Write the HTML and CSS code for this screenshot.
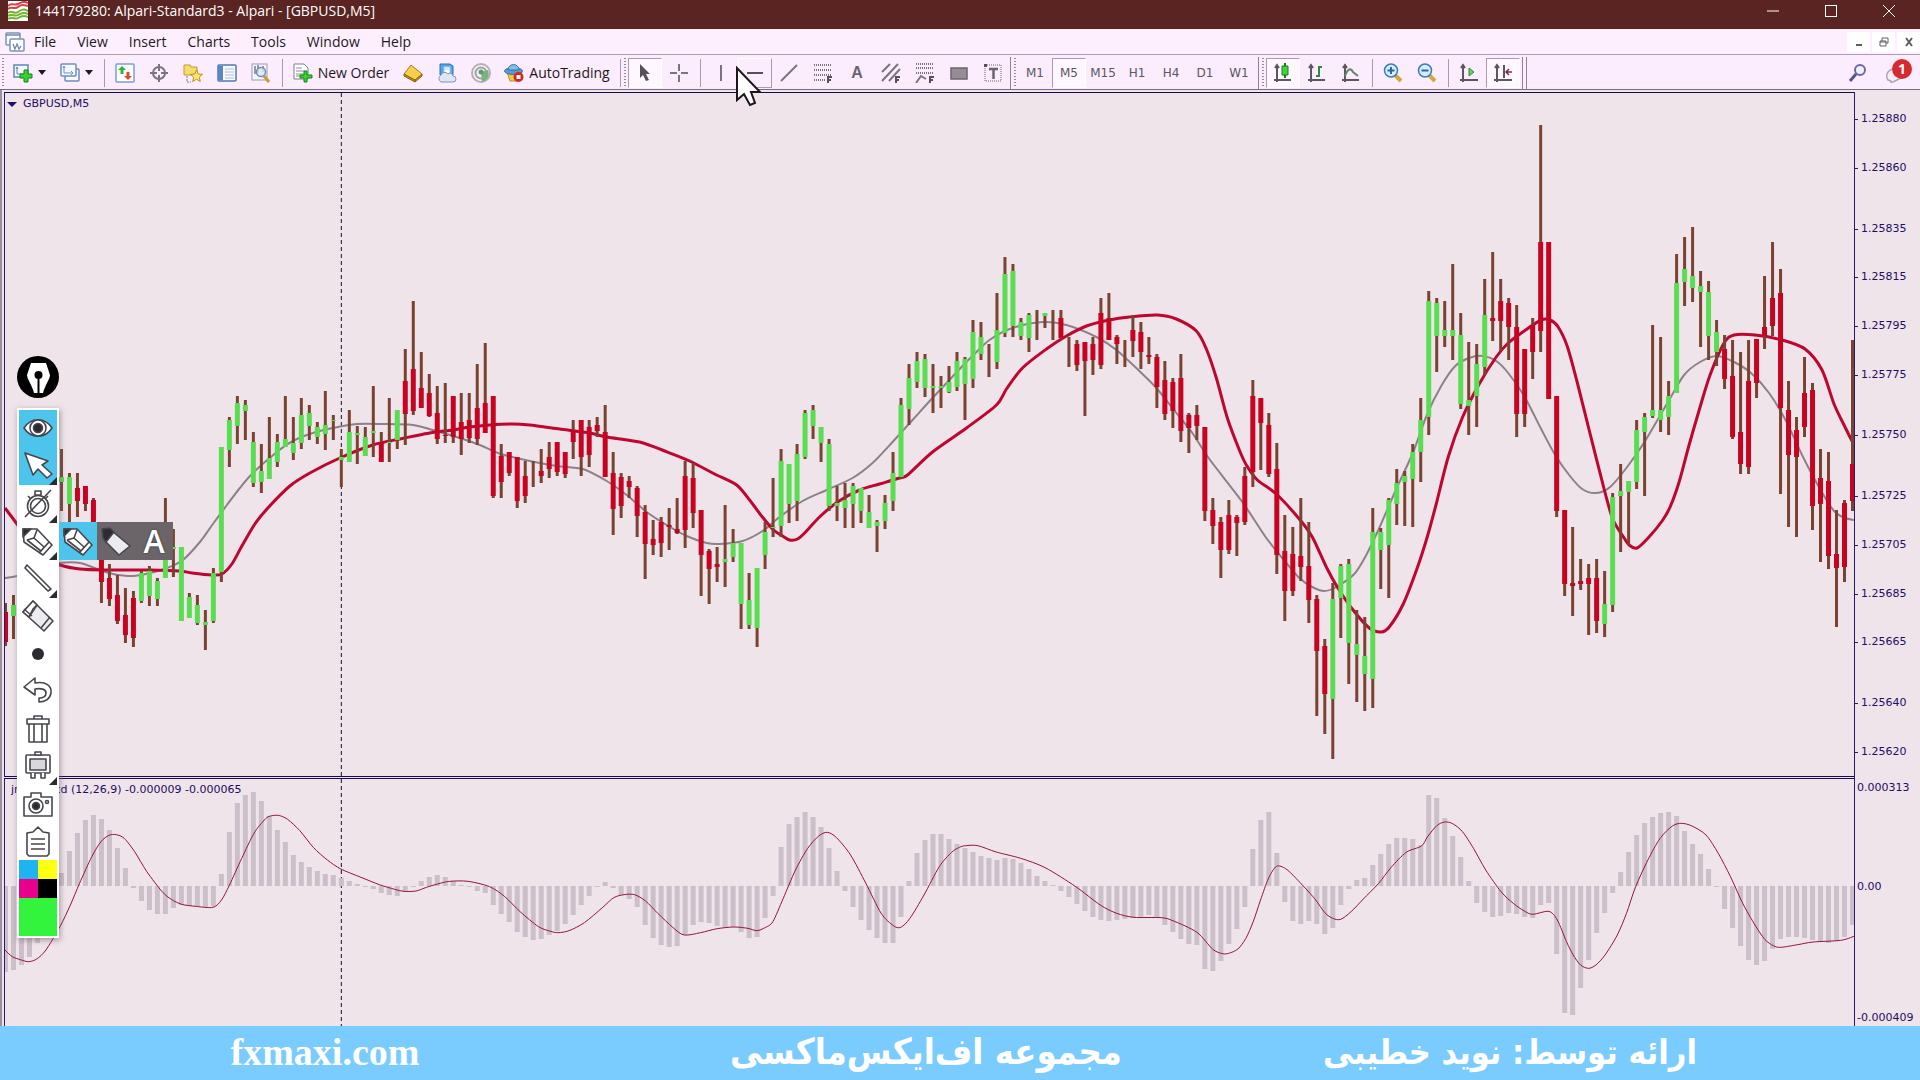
FILE: index.html
```html
<!DOCTYPE html>
<html lang="en">
<head>
<meta charset="utf-8">
<title>144179280: Alpari-Standard3 - Alpari - [GBPUSD,M5]</title>
<link rel="stylesheet" href="styles.css">
</head>
<body>
<header class="titlebar">
  <svg class="app-logo" viewBox="0 0 20 20" aria-hidden="true"><path fill="#fff" d="M0 0h20v20H0z"/><path d="M0 5c4-4 6 0 10-2s6-3 10-1M0 8c4-3 7 1 10-2s6-2 10-1" fill="none" stroke="#d8414a" stroke-width="2"/><path d="M0 12c4-4 6 2 10-1s6-3 10-1M0 15c4-3 7 1 10-1s6-3 10-1M0 18c4-3 7 1 10-1s6-3 10-1" fill="none" stroke="#6fb52c" stroke-width="2"/></svg>
  <h1 class="title">144179280: Alpari-Standard3 - Alpari - [GBPUSD,M5]</h1>
  <div class="window-controls">
    <button aria-label="Minimize"><svg viewBox="0 0 14 14"><path d="M1 7h12"/></svg></button>
    <button aria-label="Maximize"><svg viewBox="0 0 14 14"><rect x="1.500" y="1.500" width="11" height="11"/></svg></button>
    <button aria-label="Close"><svg viewBox="0 0 14 14"><path d="M1 1l12 12M13 1L1 13"/></svg></button>
  </div>
</header>

<nav class="menubar" aria-label="Main menu">
  <svg class="menu-logo" viewBox="0 0 20 20" aria-hidden="true"><g fill="#fff" stroke="#7c93b8" stroke-width="1.5"><rect x="1" y="1" width="14" height="12" rx="1"/><rect x="5" y="7" width="14" height="12" rx="1"/></g><path d="M1 3h14M8 12l2 5 2-5 2 5 2-3" fill="none" stroke="#6f88b0" stroke-width="1.3"/></svg>
  <button>File</button><button>View</button><button>Insert</button><button>Charts</button><button>Tools</button><button>Window</button><button>Help</button>
  <div class="child-controls">
    <button aria-label="Minimize chart"><svg viewBox="0 0 10 10"><path d="M2 8h6" stroke-width="2"/></svg></button>
    <button aria-label="Restore chart"><svg viewBox="0 0 10 10"><path d="M3 4V1h6v5H7M1 4h6v5H1zM1 5h6"/></svg></button>
    <button aria-label="Close chart"><svg viewBox="0 0 10 10"><path d="M2 1l6 8M8 1L2 9" stroke-width="2"/></svg></button>
  </div>
</nav>

<div class="toolbar" role="toolbar" aria-label="Toolbar">
  <span class="grip"></span>
  <button class="drop" aria-label="New chart"><svg viewBox="0 0 20 20"><path d="M1 2h14v12H1z" fill="#f4f8ff" stroke="#5f86b8" stroke-width="1.5"/><path d="M4 5v6h8M3 6l1-2 1 2" fill="none" stroke="#5f86b8"/><path d="M11 7h4v4h4v4h-4v4h-4v-4H7v-4h4z" fill="#35d52e" stroke="#15861a"/></svg><i class="caret"></i></button>
  <button class="drop" aria-label="Profiles"><svg viewBox="0 0 20 20"><g fill="#f4f8ff" stroke="#6d8fbd" stroke-width="1.5"><rect x="5" y="6" width="14" height="12" rx="1"/><rect x="1" y="1" width="15" height="12" rx="1"/></g><path d="M4 4v6h9M3 5l1-2 1 2M11 8l2 2-2 2" fill="none" stroke="#6d8fbd"/></svg><i class="caret"></i></button>
  <span class="sep"></span>
  <button aria-label="Market watch"><svg viewBox="0 0 20 20"><rect x="1" y="1" width="18" height="18" rx="1" fill="#fdfcff" stroke="#7ba0cc" stroke-width="1.5"/><path d="M7 3l4 4H8.500v4h-3V7H3z" fill="#2eb53a"/><path d="M13 17l-4-4h2.500V9h3v4H17z" fill="#e2492c"/></svg></button>
  <button aria-label="Data window"><svg viewBox="0 0 20 20"><g fill="none" stroke="#7a7480" stroke-width="2"><circle cx="10" cy="10" r="6"/><path d="M10 1v7M10 12v7M1 10h7M12 10h7"/></g></svg></button>
  <button aria-label="Navigator"><svg viewBox="0 0 20 20"><path d="M1 2h6l1 2h6v8H1z" fill="#f5dc6e" stroke="#c39a2c"/><path d="M4 13v6h4" fill="none" stroke="#6b7da0" stroke-dasharray="2 1"/><path d="M13.500 7l1.800 4 4.200.4-3.200 2.800 1 4.300-3.800-2.300-3.800 2.300 1-4.300L7.500 11.400l4.200-.4z" fill="#ffe46a" stroke="#b8912a"/></svg></button>
  <button aria-label="Terminal"><svg viewBox="0 0 20 20"><rect x="1" y="2" width="18" height="16" rx="1" fill="#f7faff" stroke="#4f78b0" stroke-width="1.500"/><path d="M1 3h5v14H1z" fill="#5b86c2"/><path d="M8 6h9M8 9h9M8 12h9M8 15h9" stroke="#a9bdd8"/></svg></button>
  <button aria-label="Strategy tester"><svg viewBox="0 0 20 20"><rect x="1" y="1" width="15" height="16" fill="#f8f6fc" stroke="#9c9ab0"/><path d="M4 3v8M7 2v8M12 3v6" stroke="#6b7da0" stroke-width="1.500"/><circle cx="10" cy="9" r="4.500" fill="#d9e8f5cc" stroke="#6f8fae" stroke-width="1.500"/><path d="M13 13l5 6" stroke="#c79b35" stroke-width="3"/></svg></button>
  <span class="sep"></span>
  <button class="order"><svg viewBox="0 0 20 20"><path d="M1 1h10l4 4v11H1z" fill="#fff" stroke="#7d7d90"/><path d="M3 5h6M3 8h9M3 11h9M3 13h5" stroke="#8d8da0"/><path d="M11 8h3v4h5v3h-5v4h-3v-4H7v-3h4z" fill="#35d52e" stroke="#15861a"/></svg>New Order</button>
  <button aria-label="MetaEditor"><svg viewBox="0 0 20 20"><path d="M1 11l7-9 11 9-7 7z" fill="#f6cf4d" stroke="#a97a18"/><path d="M1 11v2l11 6v-2zM12 17l7-6v2l-7 6z" fill="#c28d20" stroke="#8a6512"/></svg></button>
  <button aria-label="Cloud storage"><svg viewBox="0 0 20 20"><path d="M3 1h10l3 2v9H3z" fill="#4fa8e8" stroke="#2c74b4"/><path d="M7 4h6v7H7zM7 6h6" fill="#fff" stroke="#a9d1f2"/><path d="M4 19a4 4 0 010-7 4 4 0 017-1 3 3 0 015 2 3 3 0 010 6z" fill="#dce6f6" stroke="#8293b4"/></svg></button>
  <button aria-label="Signals"><svg viewBox="0 0 20 20"><g fill="none" stroke="#b3b0b6" stroke-width="2"><circle cx="10" cy="10" r="9"/><circle cx="10" cy="10" r="5.500" stroke="#98a69c"/></g><path d="M10 9l7-2c2 5 0 10-6 12z" fill="#77b37f"/><circle cx="10" cy="9" r="2.500" fill="#5f9b70"/></svg></button>
  <button class="auto"><svg viewBox="0 0 20 20"><path d="M3 9h15l-5 9H6z" fill="#f2c843" stroke="#b98d22"/><ellipse cx="9.500" cy="8" rx="9" ry="3.500" fill="#5a9bd4" stroke="#3873ac"/><path d="M4 7a5.500 5.500 0 0111 0z" fill="#83bde8" stroke="#3873ac"/><circle cx="14.500" cy="14" r="5" fill="#d8261f"/><path d="M12.500 12h4v4h-4z" fill="#fff"/></svg>AutoTrading</button>
  <span class="sep"></span><span class="grip"></span>
  <button class="on" aria-label="Cursor"><svg viewBox="0 0 20 20"><path d="M5 1l10 10h-4l3 6-3 1-3-6-3 3z" fill="#57505a"/></svg></button>
  <button aria-label="Crosshair"><svg viewBox="0 0 20 20"><path d="M10 1v7M10 12v7M1 10h7M12 10h7" stroke="#7a7480" stroke-width="2"/></svg></button>
  <span class="sep"></span>
  <button aria-label="Vertical line"><svg viewBox="0 0 20 20"><path d="M10 2v16" stroke="#7a7480" stroke-width="2"/></svg></button>
  <button class="hover" aria-label="Horizontal line"><svg viewBox="0 0 20 20"><path d="M2 10h16" stroke="#57505a" stroke-width="2"/></svg></button>
  <button aria-label="Trendline"><svg viewBox="0 0 20 20"><path d="M2 18L18 2" stroke="#7a7480" stroke-width="2"/></svg></button>
  <button aria-label="Fibonacci retracement"><svg viewBox="0 0 20 20"><path d="M1 2h18M1 7h18M1 12h18M1 17h11" stroke="#7a7480" stroke-width="2" stroke-dasharray="1 1"/><path d="M15 20v-6h4M15 17h3" fill="none" stroke="#57505a" stroke-width="2"/></svg></button>
  <button class="letter">A</button>
  <button aria-label="Equidistant channel"><svg viewBox="0 0 20 20"><path d="M1 9l8-8M1 18L17 1M8 18L19 6" stroke="#7a7480" stroke-width="2"/><path d="M15 20v-6h4M15 17h3" fill="none" stroke="#57505a" stroke-width="2"/></svg></button>
  <button aria-label="Fibonacci expansion"><svg viewBox="0 0 20 20"><path d="M1 1h18M1 5h18M1 10h18" stroke="#7a7480" stroke-width="2" stroke-dasharray="1 1"/><path d="M1 20l5-7 5 3" fill="none" stroke="#7a7480" stroke-width="2"/><path d="M15 20v-6h4M15 17h3" fill="none" stroke="#57505a" stroke-width="2"/></svg></button>
  <button aria-label="Rectangle"><svg viewBox="0 0 20 20"><path d="M2 5h16v11H2z" fill="#958c98" stroke="#6a6470" stroke-width="1.500"/></svg></button>
  <button aria-label="Text label"><svg viewBox="0 0 20 20"><path d="M2 2h16v16H2z" fill="none" stroke="#6a6470" stroke-dasharray="1 1"/><path d="M6 6h9M10.500 6v10" stroke="#6a6470" stroke-width="2.500"/><path d="M1 1h3v3H1z" fill="#57505a"/></svg></button>
  <span class="edge"></span><span class="grip"></span>
  <button class="tf">M1</button><button class="tf on">M5</button><button class="tf">M15</button><button class="tf">H1</button><button class="tf">H4</button><button class="tf">D1</button><button class="tf">W1</button>
  <span class="edge wide"></span><span class="grip"></span>
  <button class="on" aria-label="Candlesticks"><svg viewBox="0 0 20 20"><path d="M4 3v16M1 17h17M2 5l2-3 2 3" fill="none" stroke="#5d555f" stroke-width="2"/><path d="M12 0v15" stroke="#187a1c" stroke-width="2"/><path d="M9 3h6v9H9z" fill="#3fd53b" stroke="#187a1c"/></svg></button>
  <button aria-label="Bar chart"><svg viewBox="0 0 20 20"><path d="M4 3v16M1 17h17M2 5l2-3 2 3" fill="none" stroke="#5d555f" stroke-width="2"/><path d="M12 3v11M12 4h3M9 13h3" stroke="#2e8b3a" stroke-width="2"/></svg></button>
  <button aria-label="Line chart"><svg viewBox="0 0 20 20"><path d="M4 3v16M1 17h17M2 5l2-3 2 3" fill="none" stroke="#5d555f" stroke-width="2"/><path d="M4 13c3-8 6-8 8-4l5 4" fill="none" stroke="#5c8a63" stroke-width="2"/></svg></button>
  <span class="sep"></span>
  <button aria-label="Zoom in"><svg viewBox="0 0 20 20"><path d="M12 12l6 6" stroke="#d3a93a" stroke-width="4"/><circle cx="8" cy="7.500" r="6.500" fill="#d4ecfb" stroke="#3c7cb8" stroke-width="1.500"/><path d="M4.500 7.500h7M8 4v7" stroke="#2b66a6" stroke-width="2"/></svg></button>
  <button aria-label="Zoom out"><svg viewBox="0 0 20 20"><path d="M12 12l6 6" stroke="#d3a93a" stroke-width="4"/><circle cx="8" cy="7.500" r="6.500" fill="#d4ecfb" stroke="#3c7cb8" stroke-width="1.500"/><path d="M4.500 7.500h7" stroke="#2b66a6" stroke-width="2"/></svg></button>
  <span class="sep"></span>
  <button aria-label="Auto scroll"><svg viewBox="0 0 20 20"><path d="M4 3v16M1 17h18M2 5l2-3 2 3" fill="none" stroke="#5d555f" stroke-width="2"/><path d="M10 5l5 4-5 4z" fill="#5fd36a" stroke="#2e8b3a"/></svg></button>
  <button class="on" aria-label="Chart shift"><svg viewBox="0 0 20 20"><path d="M4 3v16M1 17h18M2 5l2-3 2 3M11 2v13" fill="none" stroke="#5d555f" stroke-width="2"/><path d="M13 9h6M16 6l-3 3 3 3" fill="none" stroke="#7b3146" stroke-width="1.500"/></svg></button>
  <span class="edge wide"></span><span class="edge"></span>
  <div class="toolbar-right">
    <button aria-label="Search"><svg viewBox="0 0 20 20"><circle cx="12" cy="7" r="5" fill="#eef0ff" stroke="#6a6a9c" stroke-width="2"/><path d="M8 11l-6 7" stroke="#565688" stroke-width="3"/></svg></button>
    <button class="chat" aria-label="Notifications"><svg viewBox="0 0 20 20"><path d="M2 17a7 7 0 01-1-6 8 8 0 018-5h6v9l-6 3-4 2v-2z" fill="#f6eef8" stroke="#b0a4b4" stroke-width="1.500"/></svg><span class="badge">1</span></button>
  </div>
</div>

<main class="workspace">
  <section class="pane" aria-label="GBPUSD chart">
    <svg id="price" viewBox="5 93 1850 683" preserveAspectRatio="none"></svg>
    <p class="pane-label"><i class="caret"></i>GBPUSD,M5</p>
  </section>
  <ul class="axis price-axis">
    <li class="s20">1.25880</li><li class="s25">1.25860</li><li class="s20">1.25835</li><li class="s20">1.25815</li><li class="s20">1.25795</li><li class="s25">1.25775</li><li class="s25">1.25750</li><li class="s20">1.25725</li><li class="s20">1.25705</li><li class="s20">1.25685</li><li class="s25">1.25665</li><li class="s20">1.25640</li><li class="last">1.25620</li>
  </ul>
  <section class="pane" aria-label="MACD">
    <svg id="macd" viewBox="5 779 1850 247" preserveAspectRatio="none"></svg>
    <p class="pane-label macd-label">jma_macd (12,26,9) -0.000009 -0.000065</p>
  </section>
  <ul class="axis macd-axis"><li>0.000313</li><li>0.00</li><li>-0.000409</li></ul>

  <aside class="pen">
    <button class="pen-logo" aria-label="Pen menu"><svg viewBox="0 0 42 42"><circle cx="21" cy="21" r="21" fill="#000"/><path d="M14 7h15l4 12c0 4-5 10-7 18H17c-2-8-7-14-7-18z" fill="#fff"/><circle cx="21.500" cy="19" r="4" fill="#000"/><path d="M21.500 19v18" stroke="#000" stroke-width="2"/></svg></button>
    <div class="palette">
      <div class="tools">
        <button class="sel" aria-label="Show ink"><svg viewBox="0 0 32 32"><path d="M2 15c7-11 21-11 28 0-7 11-21 11-28 0z" fill="#fff"/><circle cx="16" cy="15" r="8" fill="#fff"/><circle cx="16" cy="15" r="4.500" fill="#2b2b30"/></svg></button>
        <button class="sel more" aria-label="Pointer"><svg viewBox="0 0 32 32"><path d="M3 3l23 8-6 4 10 9-5 4-9-9-5 6z" fill="#fff"/></svg></button>
        <button class="more" aria-label="Timer"><svg viewBox="0 0 32 32"><circle cx="16" cy="18" r="10.500"/><circle cx="16" cy="18" r="7.500"/><path d="M13 3h6v4h-6zM6 8l3 3M26 8l-3 3M3 29L29 2"/></svg></button>
        <button class="more" aria-label="Pencil"><svg viewBox="0 0 32 32"><path d="M1 4h14l15 16-9 10L2 17z"/><path d="M1 4h8l-8 8z" fill="#2b2b30"/><path d="M5 15l7-2 3-8M5 15l14 11 8-9M12 13l10 9M17 28l10-11" fill="none"/></svg></button>
        <button class="more" aria-label="Line"><svg viewBox="0 0 32 32"><path d="M5 2l24 24-3 2L3 5z"/></svg></button>
        <button aria-label="Eraser"><svg viewBox="0 0 32 32"><path d="M11 1l20 20-9 10L1 12z" fill="#ececf0"/><path d="M1 12L11 1l4 4-4 4-4 8z" fill="#fff"/><path d="M7 17l8-12M19 28l9-11M2 9l8 7" fill="none"/></svg></button>
        <button aria-label="Pen size"><svg viewBox="0 0 32 32"><circle cx="16" cy="16" r="6" fill="#2b2b30" stroke="none"/></svg></button>
        <button aria-label="Undo"><svg viewBox="0 0 32 32"><path d="M2 12l11-9v5c11-2 17 3 16 10-1 6-6 9-12 9v-4c5 0 7-2 7-5 0-4-5-5-11-4v6z"/></svg></button>
        <button aria-label="Delete"><svg viewBox="0 0 32 32"><path d="M5 6h22v5H5zM12 3h8v3h-8zM7 11h18v18H7zM12 11v18M20 11v18"/></svg></button>
        <button class="more" aria-label="Whiteboard"><svg viewBox="0 0 32 32"><rect x="4" y="5" width="24" height="18" rx="1"/><path d="M8 9h16v11H8z" fill="#d8d8dc"/><path d="M13 2h6v3h-6zM9 23v5h4v-5M19 23v5h4v-5"/></svg></button>
        <button aria-label="Screenshot"><svg viewBox="0 0 32 32"><path d="M2 9h7V5h10v4h11v19H2z"/><circle cx="14" cy="18" r="7"/><circle cx="14" cy="18" r="3.500" fill="#2b2b30"/><circle cx="25" cy="14" r="1.500"/></svg></button>
        <button aria-label="Clipboard"><svg viewBox="0 0 32 32"><path d="M5 8l6-1 5-5 5 5 6 1v21l-2 2H7l-2-2zM9 14h14M9 19h14M9 24h14"/></svg></button>
      </div>
      <div class="swatches">
        <button class="cyan" aria-label="Cyan"></button><button class="yellow" aria-label="Yellow"></button><button class="magenta" aria-label="Magenta"></button><button class="black" aria-label="Black"></button><button class="current" aria-label="Current colour"></button>
      </div>
      <div class="flyout">
        <button class="sel" aria-label="Pencil tool"><svg viewBox="0 0 32 32"><path d="M2 4h13l15 16-9 10L3 17z"/><path d="M2 4h7l-7 7z" fill="#2b2b30"/><path d="M5 15l7-2 3-8M5 15l14 11 8-9M12 13l10 9M17 28l10-11" fill="none"/></svg></button>
        <button aria-label="Marker"><svg viewBox="0 0 32 32"><path d="M12 6l18 15-11 9L5 16z" fill="#ececf0"/><path d="M2 4l8-1 4 4-8 10-3-4z" fill="#2b2b30"/></svg></button>
        <button class="text-tool">A</button>
      </div>
    </div>
  </aside>
</main>

<footer class="banner">
  <a href="#" class="site">fxmaxi.com</a>
  <span class="group" lang="fa" dir="rtl">مجموعه اف‌ایکس‌ماکسی</span>
  <span lang="fa" dir="rtl">ارائه توسط: نوید خطیبی</span>
</footer>
<svg class="pointer" viewBox="0 0 30 42" aria-hidden="true"><path d="M2 2v32l7-6 6 11 5-2-4-11h9z" fill="#fff" stroke="#1d1420" stroke-width="2"/></svg>
<script src="chart.js"></script>
</body>
</html>
```
FILE: styles.css
```css
* { box-sizing: border-box; }
body {
  margin: 0;
  height: 100vh;
  display: flex;
  flex-direction: column;
  overflow: hidden;
  font: 14px/20px "Open Sans", "Noto Sans", sans-serif;
  color: #1f1722;
  background: #efe4ea;
}
button { border: 0; padding: 0; background: none; font: inherit; color: inherit; display: flex; align-items: center; justify-content: center; }
svg { display: block; }
ul, p, h1 { margin: 0; padding: 0; list-style: none; }

.titlebar { flex: none; height: 29px; padding: 0 2px 6px 8px; display: flex; align-items: center; color: #fff; background: #592421; border-bottom: 1px solid #5c1a1c; }
.app-logo { width: 20px; height: 20px; margin-right: 7px; }
.title { font-size: 14px; font-weight: 400; }
.window-controls { margin-left: auto; display: flex; }
.window-controls button { width: 58px; height: 22px; }
.window-controls svg { width: 14px; height: 14px; fill: none; stroke: #fff; stroke-width: 1; }

.menubar { flex: none; height: 26px; padding-left: 5px; display: flex; align-items: center; background: #fdeffe; border-bottom: 1px solid #aa9fb0; }
.menu-logo { width: 20px; height: 20px; }
.menubar > button { padding: 0 0 0 9px; margin-right: 12px; }
.child-controls { margin-left: auto; display: flex; gap: 2px; }
.child-controls button { width: 23px; height: 20px; background: #fff; }
.child-controls svg { width: 10px; height: 10px; fill: none; stroke: #615a66; }

.toolbar { flex: none; height: 35px; padding: 1px 0 0 2px; display: flex; align-items: center; background: #fbedfd; border-bottom: 1px solid #766d7a; }
.toolbar button { flex: none; width: 34px; height: 30px; }
.toolbar svg { width: 20px; height: 20px; flex: none; }
.toolbar .drop { width: 47px; gap: 5px; }
.toolbar .order, .toolbar .auto { width: auto; min-width: 110px; gap: 5px; padding: 0 4px; white-space: nowrap; }
.toolbar .auto { min-width: 118px; }
.toolbar .on { background: #fff7ff; border: 1px solid #a79bac; border-right-color: #fff; border-bottom-color: #fff; }
.toolbar .hover { border: 1px solid #a79bac; border-top-color: #fff; border-left-color: #fff; }
.toolbar .letter { font: 700 16px/20px "Liberation Sans", sans-serif; color: #6a6470; }
.toolbar .tf { font: 12px/20px "DejaVu Sans", sans-serif; color: #5d5562; }
.grip { flex: none; width: 4px; height: 30px; background: repeating-linear-gradient(#938998 0 1px, transparent 1px 3px); border-right: 2px solid #fbedfd; }
.sep { flex: none; width: 8px; height: 28px; background: linear-gradient(#a79bac, #a79bac) center / 1px 100% no-repeat; }
.edge { flex: none; width: 4px; height: 32px; border-left: 1px solid #8f8594; }
.edge.wide { margin-left: 2px; }
.caret { width: 0; height: 0; border: 4px solid transparent; border-top: 5px solid #1f1722; border-bottom: 0; }
.toolbar-right { margin-left: auto; padding-right: 7px; display: flex; }
.toolbar .chat { position: relative; margin-left: 4px; }
.badge { position: absolute; top: 1px; right: 1px; width: 20px; height: 20px; border-radius: 50%; background: #d72a30; color: #fff; font-weight: 700; }

.workspace { flex: 1; min-height: 0; position: relative; padding: 2px 0 0 2px; display: grid; grid-template-columns: minmax(0, 1fr) 66px; grid-template-rows: minmax(0, 685fr) minmax(0, 248fr); row-gap: 1px; border-left: 2px solid #9a919e; }
.pane { position: relative; min-height: 0; border-top: 1px solid #190a55; border-left: 1px solid #2b1a72; }
.pane:first-child { border-bottom: 1px solid #190a55; }
.pane > svg { width: 100%; height: 100%; }
.pane-label { position: absolute; top: 4px; left: 2px; display: flex; align-items: center; gap: 6px; font: 11px/14px "DejaVu Sans", sans-serif; color: #220d66; }
.pane-label .caret { border-width: 5px 5px 0; border-top-color: #220d66; }
.macd-label { left: 6px; }
.axis { display: flex; flex-direction: column; border-left: 1px solid #2b1a72; font: 11px/16px "DejaVu Sans", sans-serif; color: #220d66; }
.price-axis { padding-top: 19px; margin-bottom: -1px; }
.price-axis li { display: flex; align-items: flex-start; gap: 3px; min-height: 0; }
.price-axis li::before { content: ""; width: 3px; height: 1px; margin-top: 8px; background: #2b1a72; }
.s20 { flex: 20 1 0; }
.s25 { flex: 25 1 0; }
.last { flex: 0 0 34px; }
.macd-axis { padding: 2px 0 0 2px; display: grid; grid-template-rows: 99fr 131fr 16px; }

.pen { position: absolute; left: 15px; top: 266px; z-index: 2; }
.pen-logo svg { width: 42px; height: 42px; }
.palette { position: relative; width: 42px; margin-top: 10px; padding: 2px; background: #fff; box-shadow: 1px 2px 6px #6b5f6b99; }
.tools { height: 450px; display: grid; grid-auto-rows: 1fr; }
.tools button { position: relative; }
.palette svg { width: 32px; height: 32px; fill: #fff; stroke: #46464d; stroke-width: 1.6; stroke-linejoin: round; }
.palette .sel { background: #4cc4ec; }
.more::after { content: ""; position: absolute; right: 0; bottom: 0; border-left: 8px solid transparent; border-bottom: 8px solid #2b2b30; }
.swatches { display: grid; grid-template-columns: 1fr 1fr; grid-template-rows: 19px 19px 38px; }
.cyan { background: #1eb4f0; }
.yellow { background: #ffff10; }
.magenta { background: #e8008c; }
.black { background: #000; }
.swatches .current { grid-column: span 2; background: #32f43c; }
.flyout { position: absolute; left: 42px; top: 114px; display: flex; background: #6b6469; }
.flyout button { width: 38px; height: 38px; }
.text-tool { font: 600 32px/38px "Open Sans", sans-serif; color: #fff; text-shadow: 0 0 2px #2b2b30; }

.banner { flex: none; height: 54px; padding-bottom: 2px; display: grid; grid-template-columns: 650fr 552fr 616fr 102fr; align-items: center; justify-items: center; background: #7accff; color: #fff; font: 700 34px/52px "DejaVu Sans Condensed", "DejaVu Sans", sans-serif; white-space: nowrap; }
.group { font-size: 36px; }
.site { color: #fff; text-decoration: none; font: 700 38px/52px "Liberation Serif", serif; }
.pointer { position: absolute; left: 735px; top: 66px; width: 30px; height: 42px; z-index: 3; }

.wick { stroke: #7a4331; stroke-width: 3; fill: none; }
.up { fill: #5add52; }
.down { fill: #c60422; }
.hist { fill: #cbc0c9; }
.ma-fast, .ma-slow, .signal, .period { fill: none; stroke-linejoin: round; }
.ma-fast { stroke: #8d8189; stroke-width: 2; }
.ma-slow { stroke: #bd0630; stroke-width: 3; }
.signal { stroke: #94123c; stroke-width: 1; }
.period { stroke: #150b30; stroke-width: 1; stroke-dasharray: 4 3; }
```
FILE: chart.js
```js
// Each bar: direction, then high, body top, body bottom and low as plot rows.
const bars = `d603,612,642,646 u595,605,616,639 u560,570,590,600 d550,560,580,590 u520,530,550,560 u500,510,530,540 u470,480,510,520
u449,477,482,511 u473,477,504,530 d473,488,501,517 d486,486,504,511 d498,500,530,535 d525,540,582,603 d564,578,599,606 d575,595,621,624
d588,615,635,643 d591,598,638,647 u571,573,601,603 u566,571,596,606 u578,581,599,606 u498,545,578,578 u529,547,549,577 u547,547,621,621
u593,597,618,618 u595,605,623,625 u610,622,625,650 u568,573,621,623 u447,447,572,582 u417,420,450,467 u396,403,426,444 u400,405,411,440
u432,442,483,487 u444,471,482,493 u417,458,479,479 u434,442,462,467 u396,439,447,447 u417,443,453,460 u398,415,443,449 u405,413,426,440
u422,427,437,444 u391,425,434,450 u415,420,421,440 u449,457,460,487 u410,432,462,462 u426,433,435,464 u427,437,456,456 u386,431,433,457
d432,442,462,462 u398,442,443,462 u410,410,440,449 d349,381,414,445 d301,369,411,415 d352,388,408,408 d374,393,416,417 d386,413,439,444
d383,435,436,443 d396,396,437,443 d393,422,439,455 d393,420,438,443 d364,408,439,445 d343,403,433,433 d396,396,496,498 d444,456,482,498
d452,452,473,476 d457,457,501,508 d461,476,496,503 d461,461,461,487 d449,471,476,483 d442,457,469,478 d442,442,472,476 d452,452,474,478
d420,430,442,459 d420,420,457,476 d420,427,455,467 d417,425,431,437 d405,432,477,477 d452,473,509,535 d473,477,506,518 d476,481,487,498
d486,488,516,537 d505,512,544,579 d520,539,545,555 d517,522,543,557 d508,525,527,550 d498,529,533,534 d461,476,530,548 d463,478,513,528
d510,510,555,596 d549,551,569,604 d547,564,567,582 u505,559,562,587 u529,543,557,562 u543,543,604,629 u573,600,625,629 u568,568,628,647
u522,532,555,569 u478,527,528,537 u449,461,526,537 u464,464,504,523 u444,454,501,521 u410,413,457,459 u405,410,426,439 u427,427,443,462
u439,444,506,511 u486,503,506,521 u483,500,508,528 u483,486,504,528 u488,488,511,523 u495,512,528,528 u520,522,526,552 u495,503,521,529
u452,473,501,511 u398,405,477,479 u364,378,409,425 u352,361,382,388 u354,359,388,397 u364,386,388,413 u376,386,388,408 u366,382,392,393
u352,361,387,391 u357,359,384,420 u320,332,379,388 u322,337,354,360 u344,344,344,377 u293,330,362,369 u257,274,333,337 u264,271,326,337
u318,322,336,340 u313,315,338,352 u310,310,310,340 u313,313,316,328 u310,310,310,340 d310,318,338,339 d337,337,337,367 d340,344,365,371
d342,342,361,416 d337,344,360,375 d298,313,365,369 d293,318,340,340 d335,337,344,364 d340,340,340,367 d315,330,341,357 d322,332,352,369
d337,355,357,364 d354,357,387,408 d361,380,414,420 d378,382,411,428 d354,378,431,442 d413,415,428,453 d405,415,426,440 d427,427,511,521
d498,510,526,544 d517,522,550,578 d500,515,550,554 d515,517,523,556 d467,476,522,525 d380,396,472,487 d398,398,423,470 d413,425,474,477
d443,469,555,574 d515,551,591,621 d527,554,591,596 d498,556,567,581 d522,566,600,623 d595,599,651,716 d639,646,694,734 u583,599,699,759
u564,566,598,638 u559,564,643,684 u610,644,655,702 u617,656,674,711 u508,532,679,708 u528,532,550,589 u498,500,545,598 u469,483,504,525
u471,476,482,526 u444,452,479,527 u398,420,452,482 u291,301,417,435 u298,303,336,372 u301,330,336,347 u264,330,336,360 u313,335,404,409
u342,400,406,435 u344,364,396,427 u279,315,367,375 d252,318,321,341 d279,301,321,351 d298,303,327,360 d305,327,414,437 d349,349,414,427
d318,325,352,379 d125,242,331,352 d242,242,399,399 d396,396,511,517 d510,510,584,596 d527,583,586,616 d559,581,584,590 d564,578,584,635
d559,578,621,633 u571,604,624,637 u493,497,605,612 u464,491,496,552 u481,481,492,545 u420,430,482,489 u413,417,432,496 u325,410,416,418
u337,410,420,432 u381,396,417,435 u254,283,393,393 u237,269,282,306 u227,276,288,302 u271,286,292,347 u281,292,336,360 u320,332,352,366
d335,349,379,389 d340,376,437,439 d352,432,464,474 d340,381,467,474 d339,339,383,398 d276,327,336,349 d242,298,326,336 d269,293,408,494
d381,410,455,527 d417,430,457,537 d357,393,427,437 d383,390,506,530 d449,478,504,562 d452,481,556,569 d510,554,568,627 d500,503,567,582 d340,464,501,511`.split(/\s+/);

const slow = `5,508 17,524 40,556 60,565 80,569 105,570 150,570 180,571 192,573 212,575 222,574 232,564 242,546 255,524 268,508 290,486 310,473 340,458 373,445 400,439 430,433 453,430 470,427 490,425 512,424 530,425 560,429 590,433 607,437 640,442 665,451 690,461 715,474 737,485 750,500 762,516 774,530 783,536 790,540 798,539 806,532 820,517 838,502 860,490 880,484 900,478 908,475 933,452 967,428 997,405 1007,389 1023,368 1047,349 1067,336 1087,326 1110,320 1130,317 1158,315 1177,319 1197,331 1207,349 1217,378 1228,418 1240,450 1247,465 1258,480 1277,494 1300,519 1313,537 1327,567 1338,587 1353,609 1370,628 1382,632 1390,627 1404,604 1418,568 1428,537 1437,504 1449,457 1463,418 1480,384 1497,357 1509,343 1525,331 1542,320 1551,320 1559,327 1568,346 1578,382 1590,430 1606,493 1614,520 1625,538 1630,545 1638,548 1649,538 1663,521 1671,507 1680,482 1690,445 1701,407 1711,375 1725,343 1735,335 1756,335 1783,340 1806,349 1823,370 1835,404 1846,427 1855,445`;
const fast = `5,578 17,576 40,567 60,563 80,563 100,570 113,574 133,576 150,573 167,568 183,560 200,542 213,524 227,505 240,488 253,473 277,452 293,441 313,433 333,428 357,424 383,424 413,425 433,430 460,438 480,445 501,454 530,461 557,466 583,469 607,481 627,495 647,512 667,525 687,536 707,543 720,544 743,541 763,531 780,517 803,501 827,490 853,478 873,463 893,442 913,420 933,398 963,366 973,356 990,340 1013,328 1043,322 1067,325 1097,337 1117,350 1140,371 1157,388 1177,413 1193,433 1210,459 1243,502 1267,538 1287,563 1300,578 1313,587 1325,591 1337,587 1355,574 1367,555 1380,528 1397,489 1414,452 1428,414 1442,386 1456,366 1470,358 1483,356 1497,361 1509,373 1525,396 1542,429 1556,455 1570,475 1583,489 1597,493 1611,487 1628,467 1646,441 1670,400 1685,375 1701,362 1718,356 1735,362 1752,373 1770,393 1787,421 1804,457 1821,489 1835,511 1846,518 1855,520`;

const histogram = [972,970,965,957,943,925,888,873,851,833,820,815,819,830,848,868,888,901,910,914,914,908,905,906,906,907,906,874,832,803,795,792,801,816,830,842,855,862,867,871,874,875,878,881,884,887,889,893,895,896,892,887,881,877,875,877,881,885,887,891,893,905,914,922,932,937,940,939,935,931,924,915,905,896,887,882,888,895,899,907,925,938,945,947,946,935,925,922,923,926,927,927,932,938,937,918,896,847,824,817,812,817,827,848,871,891,907,920,930,938,943,943,917,881,853,840,834,834,839,844,848,852,856,858,860,858,859,863,869,876,881,885,891,897,904,911,917,920,921,920,919,918,917,915,918,925,932,939,944,945,969,971,961,944,929,907,849,820,812,853,902,921,924,921,924,934,928,905,889,880,878,865,854,844,838,838,839,845,795,798,818,836,857,881,903,912,917,916,913,914,917,918,905,903,954,1013,1015,988,960,933,913,893,872,852,835,823,817,813,812,816,831,844,854,869,887,909,928,946,960,965,961,949,939,937,937,938,940,942,943,941,937,925];

// Signal samples are stored at 49/30 horizontal and 3x vertical resolution.
const signal = [8,540,20,560,35,570,47,575,60,567,75,540,98,470,115,405,130,340,150,260,165,215,178,196,190,194,203,205,220,245,240,305,265,365,280,388,297,403,320,409,348,412,362,390,375,345,395,265,415,190,432,150,440,139,455,136,470,148,490,182,512,232,535,270,557,297,590,322,620,344,645,358,660,364,680,363,697,352,715,342,735,334,765,334,800,350,825,380,850,425,880,470,900,484,912,488,930,482,955,458,985,412,1003,383,1020,374,1037,374,1055,393,1075,430,1100,473,1118,495,1145,488,1172,476,1200,471,1222,475,1237,482,1250,473,1263,455,1280,385,1300,300,1320,235,1338,198,1352,187,1367,203,1390,255,1415,340,1440,430,1460,467,1472,472,1487,445,1510,375,1535,290,1555,247,1568,232,1578,227,1598,227,1628,246,1668,265,1708,293,1758,350,1798,405,1825,430,1853,442,1898,443,1918,453,1956,487,1982,538,1998,551,2008,550,2023,537,2036,505,2048,455,2060,390,2073,325,2086,289,2101,296,2118,325,2148,385,2165,428,2178,445,2191,448,2208,425,2228,387,2253,340,2273,293,2298,247,2323,228,2333,200,2348,167,2361,156,2374,161,2390,185,2408,235,2428,300,2453,365,2473,400,2491,423,2505,433,2531,424,2545,450,2560,515,2571,555,2583,585,2596,595,2608,585,2623,555,2643,495,2658,430,2673,350,2693,270,2713,205,2733,168,2748,160,2765,168,2788,195,2808,250,2828,320,2848,400,2868,465,2884,508,2898,527,2910,532,2938,524,2963,516,3008,511,3030,499];

const zero = 886;
const centre = i => 5.5 + 8 * i;
const parse = text => text.split(' ').map(pair => pair.split(',').map(Number));

// Passes a smooth curve through every point, with tangents taken from its neighbours.
function curve(points) {
  let d = `M${points[0]}`;
  for (let i = 0; i < points.length - 1; i++) {
    const p0 = points[i - 1] || points[i];
    const p1 = points[i];
    const p2 = points[i + 1];
    const p3 = points[i + 2] || p2;
    d += `C${p1[0] + (p2[0] - p0[0]) / 7} ${p1[1] + (p2[1] - p0[1]) / 7} ${p2[0] - (p3[0] - p1[0]) / 7} ${p2[1] - (p3[1] - p1[1]) / 7} ${p2[0]} ${p2[1]}`;
  }
  return d;
}

let price = '<path class="period" d="M341.5 93V776"/>' +
  `<path class="ma-fast" d="${curve(parse(fast))}"/><path class="ma-slow" d="${curve(parse(slow))}"/>`;
bars.forEach((bar, i) => {
  const [high, top, bottom, low] = bar.slice(1).split(',').map(Number);
  const x = centre(i);
  price += `<path class="wick" d="M${x} ${high}V${low}"/>`;
  if (bottom > top) {
    price += `<rect class="${bar[0] === 'u' ? 'up' : 'down'}" x="${x - 2.5}" y="${top}" width="5" height="${bottom - top}"/>`;
  }
});
document.getElementById('price').innerHTML = price;

let macd = '<path class="period" d="M341.5 779V1026"/>';
histogram.forEach((y, i) => {
  macd += `<rect class="hist" x="${centre(i) - 2.5}" y="${Math.min(y, zero)}" width="5" height="${Math.max(1, Math.abs(y - zero))}"/>`;
});
const points = [];
for (let i = 0; i < signal.length; i += 2) {
  points.push([signal[i] * 30 / 49, 770 + signal[i + 1] / 3]);
}
macd += `<path class="signal" d="${curve(points)}"/>`;
document.getElementById('macd').innerHTML = macd;
```
